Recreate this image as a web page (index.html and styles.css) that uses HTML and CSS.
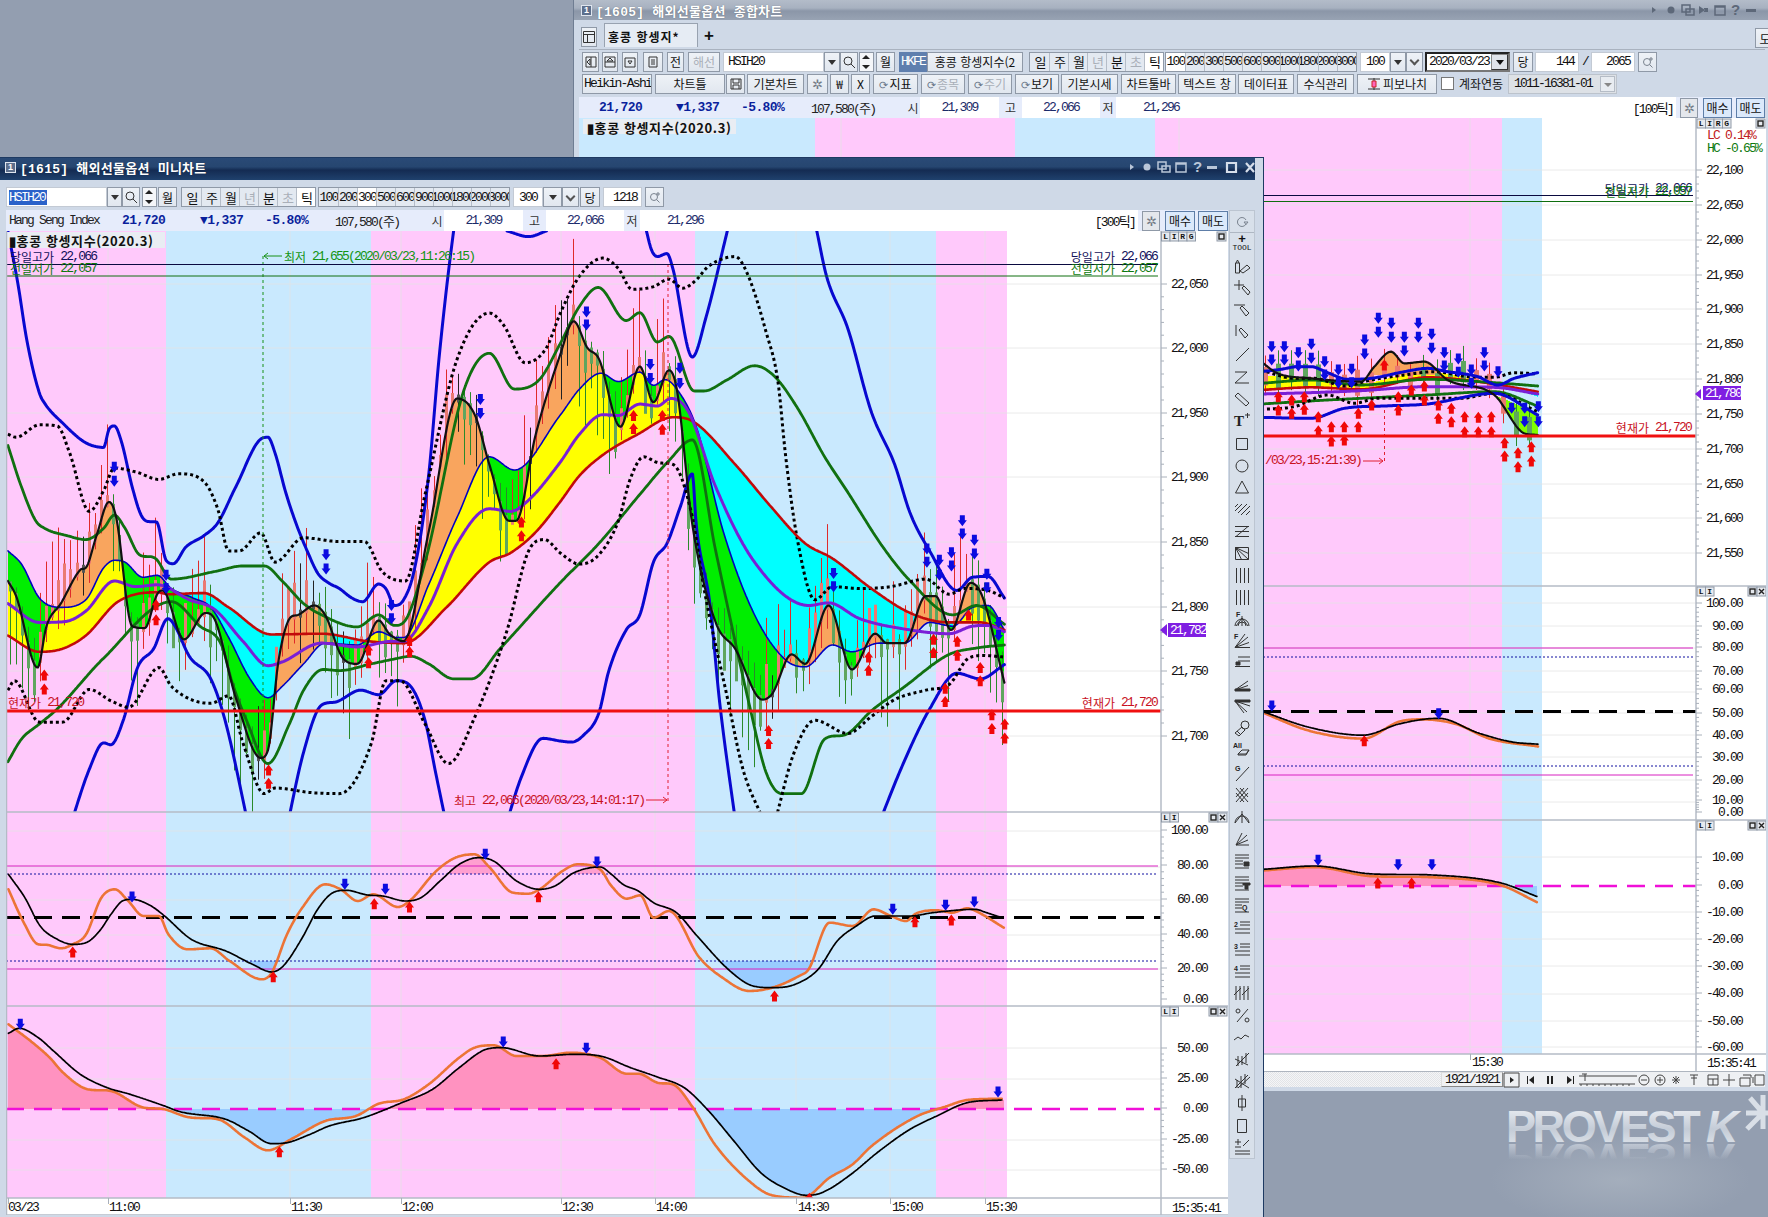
FILE: index.html
```html
<!DOCTYPE html>
<html lang="ko">
<head>
<meta charset="utf-8">
<title>해외선물옵션 차트</title>
<link rel="stylesheet" href="styles.css">
</head>
<body>
<main class="desktop">

<svg class="logo" viewBox="0 0 262 120" aria-label="PROVEST K">
  <defs>
    <linearGradient id="logoFill" x1="0" y1="0" x2="0" y2="1">
      <stop offset="0" stop-color="#f4f6f9"/><stop offset="0.55" stop-color="#c4ccd7"/><stop offset="1" stop-color="#e6eaef"/>
    </linearGradient>
    <linearGradient id="logoFade" x1="0" y1="0" x2="0" y2="1">
      <stop offset="0.5" stop-color="#d4dae3" stop-opacity="0"/><stop offset="0.85" stop-color="#d4dae3" stop-opacity=".75"/>
    </linearGradient>
  </defs>
  <text class="logo-main" x="0" y="44" fill="url(#logoFill)">PROVEST</text>
  <text class="logo-k" x="200" y="44" fill="url(#logoFill)">K</text>
  <g class="logo-flip"><text class="logo-main" x="0" y="-46" fill="url(#logoFade)">PROVEST</text><text class="logo-k" x="200" y="-46" fill="url(#logoFade)">K</text></g>
  <path class="logo-star" d="M244 0l13 15M241 31l16-16M240 15h22M257 -3v34"/>
</svg>

<section class="win back">
  <header class="title title-idle">
    <span class="num">1</span><span class="title-text">[1605] 해외선물옵션 종합차트</span>
    <svg class="title-icons-b" viewBox="0 0 110 16"><path d="M0 5l4 3-4 3z"/><circle cx="19" cy="8" r="3.5"/><path class="o" d="M30 3h8v7h-8zM34 7h8v6h-8z"/><path d="M47 4v8l6-4zM52 6h4v4h-4z"/><path class="o" d="M63 4h10v9H63zM63 5h10"/><text x="79" y="13">?</text><path d="M94 7h10v3H94z"/></svg>
  </header>
  <div class="tabs">
    <span class="btn sq w16"><svg viewBox="0 0 14 14" class="ic"><path d="M1.5 1.5h11v11h-11zM1.5 4.5h11M5.5 4.5v8"/></svg></span>
    <span class="tab">홍콩 항셍지*</span>
    <b class="tab-add">+</b>
    <span class="btn tab-end">도</span>
  </div>
  <div class="bar">
    <span class="btn w17 g3"><svg viewBox="0 0 14 14" class="ic"><path d="M2 2h10v10H2zM7 2v10M3 7l3-3v6z"/></svg></span>
    <span class="btn w16 g3"><svg viewBox="0 0 14 14" class="ic"><path d="M2 2h10v10H2zM2 7h10M7 3l3 3H4z"/></svg></span>
    <span class="btn w16 g4"><svg viewBox="0 0 14 14" class="ic"><path d="M2 3h10v9H2zM5 6h4l-2 3z"/></svg></span>
    <span class="btn w20 g5"><svg viewBox="0 0 14 14" class="ic"><path d="M3 2h8v10H3zM5 5h4M5 7h4M5 9h4"/></svg></span>
    <span class="btn w17 g4">전</span>
    <span class="btn w32 g4 off">해선</span>
    <span class="field w101 g3">HSIH20</span>
    <span class="btn w16 caret"></span>
    <span class="btn w18"><svg viewBox="0 0 14 14" class="ic"><circle cx="6" cy="6" r="4"/><path d="M9 9l4 4"/></svg></span>
    <span class="spin w15 g1"></span>
    <span class="btn w19 g2">월</span>
    <span class="hk w28 g4">HKFE</span>
    <span class="btn w96">홍콩 항셍지수(2</span>
    <span class="seg g6"><i>일</i><i>주</i><i>월</i><i class="off">년</i><i>분</i><i class="off">초</i><i class="on">틱</i></span>
    <span class="seg g1"><i class="on">100</i><i>200</i><i>300</i><i>500</i><i>600</i><i>900</i><i>1000</i><i>1800</i><i>2000</i><i>3000</i></span>
    <span class="field w30 g3 ctr">100</span>
    <span class="btn w16 caret"></span><span class="btn w17 chev"></span>
    <span class="field w85 g2 date">2020/03/23<span class="date-dd"></span></span>
    <span class="btn w20 g3">당</span>
    <span class="field w44 g2 end">144</span><span class="slash">/</span><span class="field w44 end">2065</span>
    <span class="btn w19 g3"><svg viewBox="0 0 14 14" class="ic soft"><circle cx="6" cy="7" r="3.5"/><path d="M8.5 9.5l3 3M10 2v4M8 4h4"/></svg></span>
  </div>
  <div class="bar">
    <span class="btn w70 g3 lt">Heikin-Ashi</span>
    <span class="btn w70 g3">차트틀</span>
    <span class="btn w19 g1"><svg viewBox="0 0 14 14" class="ic"><path d="M2 2h10v10H2zM4 2v4h6V2M4 12V8h6v4"/></svg></span>
    <span class="btn w57 g2">기본차트</span>
    <span class="btn w21 g3 gear">✲</span>
    <span class="btn w19 g2">₩</span>
    <span class="btn w19 g2">Ⅹ</span>
    <span class="btn w45 g3"><em>⟳</em>지표</span>
    <span class="btn w44 g3 off"><em>⟳</em>종목</span>
    <span class="btn w44 g3 off"><em>⟳</em>주기</span>
    <span class="btn w44 g3"><em>⟳</em>보기</span>
    <span class="btn w57 g2">기본시세</span>
    <span class="btn w55 g3">차트툴바</span>
    <span class="btn w58 g2">텍스트 창</span>
    <span class="btn w56 g2">데이터표</span>
    <span class="btn w57 g3">수식관리</span>
    <span class="btn w80 g3"><svg viewBox="0 0 14 14" class="ic fib"><path d="M1 2h12M1 12h12M7 1v12"/><path class="r" d="M5 4h4v6H5z"/></svg>피보나치</span>
    <span class="check g4"></span>
    <span class="plain w46 g5">계좌연동</span>
    <span class="combo w109 g3">1011-16381-01<span class="combo-dd"></span></span>
  </div>
  <div class="info info-back">
    <span class="i-px">21,720</span><span class="i-ch">▼1,337</span><span class="i-pc">-5.80%</span><span class="i-vol">107,580(주)</span>
    <span class="i-k">시</span><span class="i-v">21,309</span><span class="i-k2">고</span><span class="i-v2">22,066</span><span class="i-k3">저</span><span class="i-v3">21,296</span>
    <span class="i-fill">[100틱]</span>
    <span class="btn w18 gear g4">✲</span><span class="btn buy g5">매수</span><span class="btn buy g4">매도</span>
  </div>
  <svg id="backChart" class="chart-back" viewBox="578 118 1187 953"></svg>
  <div class="strip">
    <span class="strip-dots"></span>
    <span class="counter">1921/1921</span>
    <svg class="strip-icons" viewBox="0 0 262 16">
      <path class="o" d="M1 1h15v14H1z"/><path d="M7 5l4 3-4 3zM24 4v8h1V4zM31 4l-5 4 5 4zM44 4h2v8h-2zM48 4h2v8h-2zM64 4l5 4-5 4zM70 4h1v8h-1z"/>
      <path class="o" d="M76 4h58M76 12h56M82 2v7M79 2h5M78 14v-2M84 14v-2M90 14v-2M96 14v-2M102 14v-2M108 14v-2M114 14v-2M120 14v-2M126 14v-2"/>
      <circle class="o" cx="141" cy="8" r="5"/><path class="o" d="M138 8h6"/><circle class="o" cx="157" cy="8" r="5"/><path class="o" d="M154 8h6M157 5v6"/>
      <path class="o" d="M169 8h8M173 4v8M170 5l6 6M176 5l-6 6M187 3h8M191 3v10M188 6h6M205 3h10v10h-10zM205 7h10M210 7v6M220 8h12M226 2v12M237 6h10v8h-10zM240 3h8v3M252 3h9v10h-9zM250 5v6M263 5v6"/>
    </svg>
  </div>
</section>

<section class="win front">
  <header class="title title-live">
    <span class="num">1</span><span class="title-text">[1615] 해외선물옵션 미니차트</span>
    <svg class="title-icons-f" viewBox="0 0 128 16"><path d="M0 5l4 3-4 3z"/><circle cx="17" cy="8" r="3.5"/><path class="o" d="M28 3h8v7h-8zM32 7h8v6h-8z"/><path class="o" d="M46 4h10v9H46zM46 5h10"/><text x="63" y="13">?</text><path d="M77 7h10v3H77z"/><path class="o t" d="M97 4h9v9h-9z"/><path class="o t" d="M116 4l8 9M124 4l-8 9"/></svg>
  </header>
  <div class="bar bar-front">
    <span class="field w101 sel-wrap"><span class="sel">HSIH20</span></span>
    <span class="btn w15 caret"></span>
    <span class="btn w18"><svg viewBox="0 0 14 14" class="ic"><circle cx="6" cy="6" r="4"/><path d="M9 9l4 4"/></svg></span>
    <span class="spin w15 g2"></span>
    <span class="btn w19 g1">월</span>
    <span class="seg g4"><i>일</i><i>주</i><i>월</i><i class="off">년</i><i>분</i><i class="off">초</i><i class="on">틱</i></span>
    <span class="seg g2"><i>100</i><i>200</i><i class="on">300</i><i>500</i><i>600</i><i>900</i><i>1000</i><i>1800</i><i>2000</i><i>3000</i></span>
    <span class="field w30 g3 ctr">300</span>
    <span class="btn w19 caret"></span><span class="btn w17 chev"></span>
    <span class="btn w20 g1">당</span>
    <span class="field w39 g3 end">1218</span>
    <span class="btn w19 g3"><svg viewBox="0 0 14 14" class="ic soft"><circle cx="6" cy="7" r="3.5"/><path d="M8.5 9.5l3 3M10 2v4M8 4h4"/></svg></span>
  </div>
  <div class="front-main">
    <div class="front-left">
      <div class="info info-front">
        <span class="i-name">Hang Seng Index</span>
        <span class="i-px">21,720</span><span class="i-ch">▼1,337</span><span class="i-pc">-5.80%</span><span class="i-vol">107,580(주)</span>
        <span class="i-k">시</span><span class="i-v">21,309</span><span class="i-k2">고</span><span class="i-v2">22,066</span><span class="i-k3">저</span><span class="i-v3">21,296</span>
        <span class="i-fill">[300틱]</span>
        <span class="btn w18 gear g4">✲</span><span class="btn buy g5">매수</span><span class="btn buy g3">매도</span>
      </div>
      <svg id="frontChart" class="chart-front" viewBox="6 230 1222 984"></svg>
    </div>
    <aside class="tools">
      <div class="tool-refresh"><svg viewBox="0 0 14 14" class="ic soft"><path d="M11 5a4.5 4.5 0 1 0 0 4M9 7h4l-2 2.500z"/></svg></div>
      <div class="tool-head"><b>+</b><span>TOOL</span></div>
      <div id="toolIcons" class="tool-icons"></div>
    </aside>
  </div>
</section>
</main>
<script src="chart.js"></script>
</body>
</html>
```
FILE: styles.css
```css
*{box-sizing:border-box}
html,body{margin:0;padding:0;height:100%;overflow:hidden}
body{font:13px "Liberation Mono","Noto Sans CJK KR",monospace;letter-spacing:-1.8px;color:#111}
.desktop{position:relative;width:1768px;height:1217px;overflow:hidden;background:radial-gradient(ellipse 130px 45px at 1620px 1180px,#a4aebc,transparent),#939eb0}
.logo{position:absolute;left:1506px;top:1098px;width:262px;height:120px;overflow:visible}
.logo-main{font:bold 45px "Liberation Sans",sans-serif;letter-spacing:-3.4px}
.logo-k{font:italic bold 45px "Liberation Sans",sans-serif}
.logo-flip{transform:scaleY(-1)}
.logo-star{fill:none;stroke:#d9dfe7;stroke-width:5}

.win{position:absolute;display:flex;flex-direction:column;background:#cfd9e7}
.back{left:573px;top:0;width:1195px;height:1091px;padding:0 3px 0 5px;border-left:1px solid #6f7d92}
.front{left:0;top:157px;width:1264px;height:1060px;padding:0 8px 3px 0;border:1px solid #1e3a62;border-bottom:0;border-left:0}

.title{display:flex;align-items:center;height:20px;flex:none;color:#fff;font:bold 13px "Liberation Mono","Noto Sans CJK KR",sans-serif;letter-spacing:.25px;position:relative}
.back .title{margin:0 -3px 0 -5px;padding-left:7px}
.title-idle{background:linear-gradient(#b3bcc9,#a7b1c0 40%,#8b96a8 55%,#98a3b3)}
.title-live{height:22px;padding:0 0 3px 5px;background:linear-gradient(#2a4a76,#264670 40%,#142b52 55%,#1f416d)}
.num{width:11px;height:11px;border:1px solid #dfe5ee;background:#5d6f8c;font-size:9px;line-height:9px;letter-spacing:0;text-align:center;margin-right:4px;font-family:"Liberation Sans",sans-serif}
.title-text{text-shadow:0 0 1px #0006}
.title-icons-b,.title-icons-f{position:absolute;top:2px;height:16px;fill:#c9d1dc}
.title-icons-b{left:1078px;width:110px;fill:#5d6879;stroke:none}
.title-icons-f{left:1130px;width:128px;top:1px;fill:#b9c6d8}
.title-icons-b .o,.title-icons-f .o{fill:none;stroke:currentColor;stroke-width:1.5}
.title-icons-b{color:#5d6879;font:bold 15px "Liberation Sans",sans-serif;letter-spacing:0}
.title-icons-f{color:#b9c6d8;font:bold 15px "Liberation Sans",sans-serif;letter-spacing:0}
.title-icons-f .t{stroke:#d6deea;stroke-width:2.2}

.tabs{display:flex;align-items:flex-end;height:30px;padding:0 0 2px 2px;border-bottom:1px solid #a9b2bf;position:relative;flex:none}
.tab{width:94px;height:24px;margin-left:7px;padding:4px 0 0 3px;background:#e6ecf4;border:1px solid #98a2b0;border-bottom:0;font:bold 12px "Noto Sans CJK KR",sans-serif;letter-spacing:1px;white-space:nowrap}
.tab-add{margin:0 0 3px 6px;font:bold 17px "Liberation Sans",sans-serif;line-height:16px;letter-spacing:0}
.tab-end{position:absolute;left:1176px;top:8px;width:20px}

.bar{display:flex;align-items:center;height:21px;flex:none;white-space:nowrap}
.back .bar{margin-top:1px}
.bar-front{height:20px;margin:7px 0 3px 6px}
.btn{display:inline-flex;align-items:center;justify-content:center;height:20px;flex:none;background:linear-gradient(#eef2f7,#e1e7ef);border:1px solid #8f99a7;font-family:"Noto Sans CJK KR",sans-serif;font-size:12px;letter-spacing:0;overflow:hidden}
.btn.off,.off{color:#a9afb8}
.btn.lt{font:13px "Liberation Mono",monospace;letter-spacing:-1.7px;justify-content:flex-start;padding-left:1px}
.btn em{font-style:normal;color:#687588;font-size:11px;margin-right:1px}
.gear{color:#727a86;font-size:13px}
.caret::after{content:"";border:4px solid transparent;border-top:5px solid #333;margin-top:5px}
.chev::after{content:"";width:5px;height:5px;border:solid #555;border-width:0 2px 2px 0;transform:rotate(45deg);margin-top:-2px}
.ic{width:14px;height:14px;fill:none;stroke:#333;stroke-width:1}
.ic.soft{stroke:#7a838f}
.ic.fib{margin-right:2px}
.ic.fib .r{stroke:#c22;fill:#f6b}
.field{display:inline-flex;align-items:center;height:20px;flex:none;background:#fff;border:1px solid #c3cad4;padding:0 4px;overflow:hidden}
.field.ctr{justify-content:center}
.field.end{justify-content:flex-end}
.date{border:2px inset #777;position:relative;padding:0 2px}
.date-dd{position:absolute;right:0;top:0;width:17px;height:16px;background:#dfe3e9;border:1px outset #888}
.date-dd::after{content:"";position:absolute;left:4px;top:5px;border:4px solid transparent;border-top:5px solid #111}
.sel{background:#2a62c9;color:#fff;padding-right:2px}
.sel-wrap{padding-left:2px}
.spin{display:inline-flex;flex-direction:column;height:20px;flex:none;background:linear-gradient(#f4f6f9 48%,#666 48%,#666 52%,#f4f6f9 52%);border:1px solid #8f99a7;position:relative}
.spin::before,.spin::after{content:"";position:absolute;left:2px;border:4px solid transparent}
.spin::before{top:-2px;border-bottom:4px solid #222}
.spin::after{bottom:-2px;border-top:4px solid #222}
.hk{display:inline-flex;align-items:center;justify-content:center;height:20px;background:#5f7fae;color:#fff;overflow:hidden}
.slash{width:12px;text-align:center;flex:none}
.seg{display:inline-flex;flex:none;height:20px;border:1px solid #8f99a7;background:#e3e9f1}
.seg i{font-style:normal;width:19px;display:flex;align-items:center;justify-content:center;overflow:hidden;border-left:1px solid #b5bdc8;white-space:nowrap}
.seg i:first-child{border-left:0}
.seg i.on{background:#fff}
.check{width:13px;height:13px;background:#fff;border:1px solid #777;flex:none}
.plain{flex:none;font:12px "Noto Sans CJK KR",sans-serif;letter-spacing:0}
.combo{display:inline-flex;align-items:center;height:20px;flex:none;background:#dde1e6;border:1px solid #bcc3cc;padding-left:5px;position:relative}
.combo-dd{position:absolute;right:1px;top:1px;width:15px;height:16px;background:#e8ecf1;border:1px solid #b5bcc6}
.combo-dd::after{content:"";position:absolute;left:3px;top:6px;border:4px solid transparent;border-top:4px solid #888}

.w15{width:15px}.w16{width:16px}.w17{width:17px}.w18{width:18px}.w19{width:19px}.w20{width:20px}.w21{width:21px}.w28{width:28px}.w30{width:30px}.w32{width:32px}.w39{width:39px}.w44{width:44px}.w45{width:45px}.w46{width:46px}.w55{width:55px}.w56{width:56px}.w57{width:57px}.w58{width:58px}.w70{width:70px}.w80{width:80px}.w85{width:85px}.w96{width:96px}.w101{width:101px}.w109{width:109px}
.g1{margin-left:1px}.g2{margin-left:2px}.g3{margin-left:3px}.g4{margin-left:4px}.g5{margin-left:5px}.g6{margin-left:6px}

.info{display:flex;align-items:center;height:21px;flex:none;background:#e6ecfb;white-space:nowrap;color:#1b2b6a}
.info>span{flex:none}
.info-back{margin-top:3px}
.i-name{width:116px;padding-left:3px;color:#222}
.i-px,.i-ch,.i-pc{font-weight:bold;color:#0a1f9c;letter-spacing:-.6px}
.i-px{width:78px}.i-ch{width:65px}.i-pc{width:70px}
.i-vol{width:95px;color:#222}
.info-back .i-px{padding-left:20px;width:97px}
.i-k,.i-k2,.i-k3{font:12px "Noto Sans CJK KR",sans-serif;letter-spacing:0;color:#333;text-align:center}
.i-k{width:14px}
.i-v,.i-v2,.i-v3{background:#fff;height:21px;display:flex;align-items:center;justify-content:center}
.i-v{width:79px}.i-k2{width:23px}.i-v2{width:78px}.i-k3{width:16px}.i-v3{width:84px;justify-content:flex-start;padding-left:27px}
.info>.i-fill{flex:1 1 auto;background:#fff;height:21px;display:flex;align-items:center;justify-content:flex-end;color:#111;padding-right:3px}
.info .btn{height:20px;background:#e4e7ec}
.info .buy{width:29px;background:#dbe9fb;border-color:#5e7ea8;color:#111}
.info-front .buy{width:30px}

.chart-back{width:1187px;height:953px;flex:none;background:#fff;display:block}
.chart-front{width:1222px;height:984px;flex:none;background:#fff;display:block}
.strip{display:flex;align-items:center;height:16px;flex:none;background:#eef0f3;border-top:1px solid #aeb5bf;position:relative}
.strip-dots{flex:1;height:15px;background:repeating-conic-gradient(#e2e4e7 0 25%,#f4f5f7 0 50%) 0 0/2px 2px}
.counter{width:62px;height:15px;background:#f0f1f3;border:1px solid #888;border-top-color:#ddd;border-left-color:#ddd;display:flex;align-items:center;justify-content:center;flex:none}
.strip-icons{width:262px;height:16px;flex:none;fill:#222;color:#444}
.strip-icons .o{fill:none;stroke:#444;stroke-width:1}
.front-main{display:flex;flex:1;min-height:0}
.front-left{display:flex;flex-direction:column;width:1222px;margin-left:6px}
.tools{width:27px;margin-left:1px;height:949px;background:#d8e0ea;border:1px solid #bcc5d1;display:flex;flex-direction:column;align-items:center}
.tool-refresh{width:100%;height:23px;display:flex;align-items:center;justify-content:center;border-bottom:1px solid #aeb7c3}
.tool-head{height:23px;padding-top:2px;display:flex;flex-direction:column;align-items:center;line-height:7px}
.tool-head b{font:bold 13px "Liberation Sans",sans-serif;line-height:8px;letter-spacing:0}
.tool-head span{font:8px "Liberation Mono",monospace;line-height:9px;letter-spacing:0}
.tool-icons{display:flex;flex-direction:column;align-items:center}
.tool-ic{width:18px;height:22px;fill:none;stroke:#333;stroke-width:1;display:block}
.tool-ic text{fill:#222;stroke:none;font:bold 7px "Liberation Sans",sans-serif;letter-spacing:0}
.tool-ic text.big{font:bold 15px "Liberation Serif",serif}
.tool-ic .f{fill:#333}

/* chart strokes */
.lay{fill:none;stroke-linejoin:round;stroke-linecap:round}
.band-blue{fill:#c9e9fe}.band-pink{fill:#ffc9fb}
.grid{stroke:#e4e4e4;stroke-width:1;opacity:.75}
.sep{stroke:#b4bbc6;stroke-width:1.5}
.tick{stroke:#a9b0ba;stroke-width:1}
.l-bb{stroke:#0808d0;stroke-width:3}
.l-gg{stroke:#107010;stroke-width:2.8}
.l-dot{stroke:#000;stroke-width:3;stroke-dasharray:3 3;stroke-linecap:butt}
.l-tb{stroke:#0000c0;stroke-width:1.6}
.l-pu{stroke:#7a1fd6;stroke-width:3}
.l-rd{stroke:#c20a0a;stroke-width:2.6}
.l-bk{stroke:#111;stroke-width:2.2}
.l-bk1{stroke:#000;stroke-width:1.7}
.l-or{stroke:#ec7436;stroke-width:2.6}
.w-r{stroke:#df2a2a}.w-g{stroke:#2a8a2a}.w-k{stroke:#222}
.b-r{fill:#ea7a72}.b-g{fill:#5fa65f}.b-k{fill:#555}
.curr{stroke:#f01010;stroke-width:3}
.hi{stroke:#0a0a40;stroke-width:1}.lo{stroke:#0e6e0e;stroke-width:1}
.mag{stroke:#d820c0;stroke-width:1}
.dotb{stroke:#1010a0;stroke-width:1;stroke-dasharray:2 2}
.dash50{stroke:#000;stroke-width:3;stroke-dasharray:18 10}
.dash0{stroke:#f010d8;stroke-width:2.6;stroke-dasharray:18 10}
.guide-g{stroke:#169016;stroke-width:1;stroke-dasharray:3 3}
.guide-r{stroke:#e02030;stroke-width:1;stroke-dasharray:3 3}
.ar-g{stroke:#169016;fill:none}.ar-r{stroke:#e02030;fill:none}
.txt{font:13px "Liberation Mono","Noto Sans CJK KR",monospace;letter-spacing:-1.8px;dominant-baseline:central}
.ko{font:12px "Noto Sans CJK KR",sans-serif;letter-spacing:0}
.ax{fill:#111}
.t-hi{fill:#10105a}.t-lo{fill:#0e7a0e}.t-red{fill:#c8121e}.t-grn{fill:#129412}.t-dk{fill:#111}
.t-lc{fill:#c02020}
.chip{fill:#e9edf3}
.chip-t{font:bold 13px "Noto Sans CJK KR",sans-serif;letter-spacing:.6px;dominant-baseline:central;fill:#111}
.mini{fill:#e6e9ee;stroke:#8f99a7;stroke-width:1}
.mini-t{font:bold 8px "Liberation Mono",monospace;letter-spacing:0;fill:#111;dominant-baseline:central}
.mini-x{fill:none;stroke:#222;stroke-width:1.4}
.tag{fill:#7f1fe2}.tag-t{fill:#fff}.tag-a{fill:#7f1fe2}
```
FILE: chart.js
```js
(function () {
  var NS = 'http://www.w3.org/2000/svg';
  function el(p, tag, attrs, txt) {
    var e = document.createElementNS(NS, tag);
    for (var k in attrs) e.setAttribute(k, attrs[k]);
    if (txt != null) e.textContent = txt;
    p.appendChild(e);
    return e;
  }
  // coordinate maps from measured crops to page pixels
  var Z7 = function (X, Y) { return [X / 2.8, 230 + Y / 2.657]; };
  var Z8 = function (X, Y) { return [560 + X / 2.57, 230 + Y / 2.657]; };
  var Z9 = function (X, Y) { return [1260 + X / 3, 300 + Y / 3]; };
  var Z11 = function (X, Y) { return [X / 2.613, 800 + Y / 3]; };
  var Z12 = function (X, Y) { return [600 + X / 2.613, 800 + Y / 3]; };
  var SH = function (X, Y) { return [X * 1.1276, Y * 1.1276]; };

  function pts(map, a) { var o = []; for (var i = 0; i < a.length; i += 2) o.push(map(a[i], a[i + 1])); return o; }
  function join() {
    var o = [];
    for (var i = 0; i < arguments.length; i++) arguments[i].forEach(function (p) {
      if (!o.length || p[0] > o[o.length - 1][0]) o.push(p);
    });
    return o;
  }
  // monotone cubic through points, parameterised by x
  function fn(P) {
    var n = P.length, d = [], m = [];
    for (var i = 0; i < n - 1; i++) d[i] = (P[i + 1][1] - P[i][1]) / (P[i + 1][0] - P[i][0]);
    m[0] = d[0]; m[n - 1] = d[n - 2];
    for (i = 1; i < n - 1; i++) {
      if (d[i - 1] * d[i] <= 0) m[i] = 0;
      else m[i] = Math.sign(d[i]) * Math.min((Math.abs(d[i - 1]) + Math.abs(d[i])) / 2, 3 * Math.abs(d[i - 1]), 3 * Math.abs(d[i]));
    }
    var f = function (x) {
      if (x <= P[0][0]) return P[0][1];
      if (x >= P[n - 1][0]) return P[n - 1][1];
      var k = 0; while (k < n - 2 && x > P[k + 1][0]) k++;
      var h = P[k + 1][0] - P[k][0], t = (x - P[k][0]) / h, t2 = t * t, t3 = t2 * t;
      return (2 * t3 - 3 * t2 + 1) * P[k][1] + (t3 - 2 * t2 + t) * h * m[k] + (-2 * t3 + 3 * t2) * P[k + 1][1] + (t3 - t2) * h * m[k + 1];
    };
    f.x0 = P[0][0]; f.x1 = P[n - 1][0];
    return f;
  }
  function line(g, P, cls) {
    var f = fn(P), d = 'M' + f.x0.toFixed(1) + ' ' + f(f.x0).toFixed(1);
    for (var x = f.x0 + 1; x < f.x1; x += 1) d += 'L' + x.toFixed(1) + ' ' + f(x).toFixed(1);
    d += 'L' + f.x1.toFixed(1) + ' ' + f(f.x1).toFixed(1);
    el(g, 'path', { d: d, 'class': 'lay ' + cls });
    return f;
  }
  function fill(g, pick, x0, x1) {
    var paths = {};
    for (var x = Math.floor(x0); x < x1; x++) {
      var r = pick(x + 0.5);
      if (!r) continue;
      (paths[r[2]] = paths[r[2]] || []).push('M' + x + ' ' + r[0].toFixed(1) + 'V' + r[1].toFixed(1) + 'h1V' + r[0].toFixed(1) + 'z');
    }
    for (var c in paths) el(g, 'path', { d: paths[c].join(''), fill: c, 'shape-rendering': 'crispEdges' });
  }
  function arrow(g, x, y, dir, color) {
    var s = dir > 0 ? 1 : -1;
    var d = 'M' + (x - 2.5) + ' ' + (y - 5.5 * s) + 'h5v' + (5 * s) + 'h2l-4.500 ' + (6 * s) + 'l-4.500 ' + (-6 * s) + 'h2z';
    el(g, 'path', { d: d, fill: color });
  }
  function arrows(g, map, list, dir, color) {
    list.forEach(function (a) {
      for (var i = 1; i < a.length; i++) { var p = map(a[0], a[i]); arrow(g, p[0], p[1], dir, color); }
    });
  }
  // Hangul runs use a proportional CJK face, everything else the narrow mono run
  function text(g, x, y, s, cls, anchor) {
    var e = el(g, 'text', { x: x, y: y, 'class': 'txt ' + cls, 'text-anchor': anchor || 'start' });
    s.split(/([\uAC00-\uD7A3]+)/).forEach(function (run) {
      if (!run) return;
      if (/[\uAC00-\uD7A3]/.test(run)) el(e, 'tspan', { 'class': 'ko' }, run);
      else e.appendChild(document.createTextNode(run));
    });
    return e;
  }
  function plainText(g, x, y, s, cls, anchor) {
    return el(g, 'text', { x: x, y: y, 'class': cls, 'text-anchor': anchor || 'start' }, s);
  }
  function rect(g, x0, y0, x1, y1, cls) { return el(g, 'rect', { x: x0, y: y0, width: x1 - x0, height: y1 - y0, 'class': cls }); }
  function hl(g, x0, x1, y, cls) { return el(g, 'line', { x1: x0, x2: x1, y1: y, y2: y, 'class': cls }); }
  function vl(g, x, y0, y1, cls) { return el(g, 'line', { x1: x, x2: x, y1: y0, y2: y1, 'class': cls }); }
  function clip(svg, id, x0, y0, x1, y1) {
    var c = el(svg, 'clipPath', { id: id });
    el(c, 'rect', { x: x0, y: y0, width: x1 - x0, height: y1 - y0 });
    return el(svg, 'g', { 'clip-path': 'url(#' + id + ')' });
  }
  function axis(g, x, labels, anchorX, sub) {
    labels.forEach(function (l, i) {
      hl(g, x, x + 6, l[1], 'tick');
      text(g, anchorX, l[1], l[0], 'ax', 'end');
      var nxt = labels[i + 1];
      if (nxt && sub) for (var k = 1; k < sub; k++) hl(g, x, x + 3, l[1] + (nxt[1] - l[1]) * k / sub, 'tick');
    });
  }
  function mini(g, x, y, w, s) { rect(g, x, y, x + w, y + 9, 'mini'); plainText(g, x + w / 2, y + 4.5, s, 'mini-t', 'middle'); }
  function miniSet(g, x, y, letters) { letters.forEach(function (s, i) { mini(g, x + i * 8.5, y, 8.5, s); }); }
  function miniMax(g, x, y, close) {
    rect(g, x, y, x + 9, y + 9, 'mini'); rect(g, x + 2, y + 2, x + 7, y + 7, 'mini-x');
    if (close) { rect(g, x + 9, y, x + 18, y + 9, 'mini'); el(g, 'path', { d: 'M' + (x + 11) + ' ' + (y + 2) + 'l5 5m0 -5l-5 5', 'class': 'mini-x' }); }
  }
  var seed = 7;
  function rnd() { seed = (seed * 16807) % 2147483647; return seed / 2147483647; }

  /* ---------- FRONT WINDOW ---------- */
  var fs = document.getElementById('frontChart');
  var bands = [[6, 166, 'band-pink'], [166, 371, 'band-blue'], [371, 695, 'band-pink'], [695, 936, 'band-blue'], [936, 1007, 'band-pink']];
  bands.forEach(function (b) { rect(fs, b[0], 230, b[1], 1197, b[2]); });
  [283, 347, 412, 476, 541, 606, 670, 735, 830, 866, 899, 934, 968, 1047, 1078, 1139, 1169].forEach(function (y) { hl(fs, 6, 1161, y, 'grid'); });
  [108, 290, 401, 561, 655, 796, 890, 985].forEach(function (x) { vl(fs, x, 230, 1197, 'grid'); });

  var J = join(pts(Z7, [22,930,45,970,105,1160,130,1050,170,990,225,900,240,895,270,810,305,720,325,760,370,1050,405,1055,440,965,455,955,515,1085,575,1015,600,1030,660,1240,730,1400,750,1380,780,1140,815,1025,835,1020,880,995,910,1020,960,1135,1000,1150,1060,1035,1090,1070,1130,1090,1200,800,1280,445,1330,490,1370,620,1425,770,1445,770,1500,540,1568,330]),
    pts(Z8, [0,330,35,240,70,310,100,340,155,520,205,360,240,455,280,370,300,420,340,780,400,1040,450,1110,520,1245,545,1230,595,1125,630,1150,690,995,750,1165,810,1070,840,1095,885,1095,940,970,965,970,1005,1060,1055,935,1085,970,1142,1200]));
  var G = join(pts(Z7, [22,850,60,885,110,975,170,1000,240,980,290,895,320,875,350,880,400,920,440,915,480,950,540,975,590,1000,640,1080,700,1190,750,1240,790,1210,850,1150,910,1095,1000,1100,1060,1065,1110,1080,1130,1080,1200,940,1280,760,1370,600,1440,635,1568,490]),
    pts(Z8, [0,490,50,420,105,378,150,400,205,375,240,410,270,395,300,420,350,520,420,800,500,1020,580,1140,630,1158,700,1100,750,1118,820,1095,885,1095,950,1040,1010,1050,1060,1000,1100,995,1142,1060]));
  var H = join(pts(Z7, [22,990,110,1040,180,1038,240,1010,320,930,380,945,440,940,530,980,600,1005,680,1090,750,1155,790,1145,900,1095,1000,1105,1100,1090,1130,1090,1200,1000,1280,830,1370,738,1430,745,1480,715,1568,615]),
    pts(Z8, [0,615,50,540,110,488,150,490,205,460,250,465,285,445,330,480,400,680,500,880,640,995,690,988,770,1030,900,1060,1000,1070,1060,1050,1100,1048,1142,1065]));
  var I = join(pts(Z7, [22,1075,110,1118,175,1110,240,1075,330,985,440,960,470,965,570,962,640,1000,760,1072,900,1070,1030,1090,1130,1095,1250,1000,1370,880,1430,855,1500,800,1568,720]),
    pts(Z8, [0,720,50,650,110,595,200,540,290,495,340,505,450,620,540,730,630,830,700,870,800,950,900,1015,1000,1040,1080,1040,1142,1060]));
  var fJ = fn(J), fG = fn(G), fI = fn(I);

  var g = clip(fs, 'cpF1', 6, 230, 1161, 811);
  var X0 = 8, X1 = 1004;
  fill(g, function (x) {
    var a = fG(x), b = fI(x);
    return a < b ? [a, b, '#ffff00'] : [b, a, '#00ffff'];
  }, X0, X1);
  fill(g, function (x) {
    var a = fJ(x), b = fG(x);
    return a < b ? [a, b, '#f9a55e'] : [b, a, '#00ee00'];
  }, X0, X1);

  // candles
  for (var cx = 10; cx < 1006; cx += 6.05) {
    var px = Math.round(cx) + 0.5, j = fJ(px), sl = fJ(px + 4) - fJ(px - 4), r1 = rnd(), r2 = rnd(), r3 = rnd();
    var kind = sl < -1.5 ? 'r' : sl > 1.5 ? 'g' : (r3 < 0.4 ? 'r' : r3 < 0.8 ? 'g' : 'k');
    if (r3 > 0.93) kind = 'k';
    var top = kind === 'r' ? j - 22 - r1 * 62 : kind === 'g' ? j - 4 - r1 * 28 : j - 15 - r1 * 40;
    var bot = kind === 'g' ? j + 22 + r2 * 62 : kind === 'r' ? j + 3 + r2 * 28 : j + 15 + r2 * 40;
    vl(g, px, top, bot, 'w-' + kind);
    var bt = kind === 'r' ? j - 6 - r2 * 30 : j - 4, bb = kind === 'g' ? j + 6 + r1 * 30 : j + 4;
    rect(g, px - 1.5, bt, px + 1.5, bb, 'b-' + kind);
  }
  line(g, G, 'l-tb');
  // upper and lower bollinger
  [pts(Z7, [22,0,50,140,75,290,110,430,125,458,175,510,235,560,265,572,290,575,305,527,320,518,340,560,370,680,395,755,415,772,438,773,465,875,485,884,520,840,570,810,610,775,660,680,735,550,750,548,770,590,800,695,830,780,860,850,890,910,920,935,950,950,985,975,1015,985,1060,938,1080,950,1105,995,1130,980,1160,900,1200,650,1230,330,1270,0,1285,-90]),
   pts(Z7, [1420,0,1480,15,1530,0]),
   join(pts(Z8, [222,0,235,50,250,68,275,60,290,100,340,335,375,230,430,0])),
   pts(Z8, [660,0,685,120,740,260,800,480,860,620,900,750,950,850,1020,955,1060,920,1100,918,1142,975]),
   pts(Z7, [190,1600,250,1430,290,1360,310,1365,345,1300,385,1160,430,1110,470,1030,490,1050,530,1130,590,1190,630,1300,700,1600]),
   pts(Z7, [800,1600,850,1385,900,1260,945,1250,1010,1220,1060,1232,1110,1195,1150,1210,1190,1300,1220,1440,1255,1600]),
   join(pts(Z7, [1410,1600,1460,1450,1520,1348,1568,1355]), pts(Z8, [0,1355,30,1358,60,1340,100,1280,125,1170,170,1060,205,1020,240,880,275,830,310,730,340,645,350,780,385,990,410,1250,455,1600])),
   pts(Z8, [810,1600,880,1420,950,1270,1020,1175,1080,1190,1142,1152])
  ].forEach(function (P) { line(g, P, 'l-bb'); });
  line(g, join(pts(Z7, [22,570,60,680,100,770,125,790,190,810,240,820,290,790,320,755,350,790,390,860,435,870,480,925,600,905,680,890,740,890,790,930,850,990,900,1020,1000,1052,1060,1020,1105,1048,1130,1040,1190,880,1300,420,1370,325,1440,420,1510,395,1568,300]),
    pts(Z8, [0,300,50,200,98,150,170,238,205,217,250,295,280,280,345,425,370,425,430,395,500,358,550,385,610,470,680,600,740,695,830,840,900,930,1010,1020,1070,995,1142,1045])), 'l-gg');
  line(g, join(pts(Z7, [22,1410,60,1350,110,1310,160,1270,290,1135,480,985,560,1050,620,1100,650,1200,690,1300,750,1415,810,1310,850,1220,905,1165,950,1168,1040,1150,1100,1138,1150,1130,1200,1150,1270,1190,1320,1190,1400,1110,1568,935]),
    pts(Z8, [0,935,100,830,205,700,280,610,340,555,400,850,490,1275,530,1440,570,1495,620,1495,680,1350,740,1335,800,1275,880,1215,1000,1125,1070,1108,1142,1100])), 'l-gg');
  line(g, join(pts(Z7, [22,540,45,548,110,515,160,518,195,590,250,745,290,690,320,630,380,640,445,660,500,645,570,665,610,740,640,850,670,850,730,802,770,880,850,815,950,825,1020,825,1070,905,1135,930,1190,700,1280,340,1370,218,1410,250,1470,350,1530,310,1568,220]),
    pts(Z8, [0,220,50,120,110,72,150,100,185,155,240,148,280,128,315,152,350,130,380,95,450,68,480,110,530,270,560,400,580,600,610,820,655,980,700,945,770,950,850,945,940,925,1000,965,1040,950,1100,955,1142,975])), 'l-dot');
  line(g, join(pts(Z7, [22,1220,40,1195,110,1305,175,1305,250,1218,310,1248,360,1265,445,1160,480,1210,590,1255,640,1235,680,1360,740,1495,770,1480,870,1492,950,1495,1040,1360,1080,1195,1120,1195,1190,1310,1255,1415,1330,1290,1420,1060,1480,850,1525,820,1568,855]),
    pts(Z8, [0,855,50,885,100,860,150,770,180,660,215,600,250,615,290,620,340,760,370,950,430,1240,470,1430,520,1560])), 'l-dot');
  line(g, pts(Z8, [555,1560,600,1390,655,1300,740,1335,800,1290,860,1245,940,1220,1000,1205,1050,1135,1090,1128,1142,1132]), 'l-dot');
  line(g, I, 'l-rd');
  line(g, H, 'l-pu');
  line(g, J, 'l-bk');

  // guide lines and levels
  vl(g, 263, 255, 710, 'guide-g');
  vl(g, 668, 263, 800, 'guide-r');
  hl(fs, 6, 1158, 263.5, 'hi');
  hl(fs, 6, 1158, 275, 'lo');
  hl(fs, 6, 1161, 710, 'curr');
  var B = '#0b0be0', R = '#f00808';
  arrows(g, Z7, [[320,628,665],[465,915,950],[913,860,898],[1096,995,1030],[1345,448,485]], 1, B);
  arrows(g, Z8, [[68,215,250],[232,355,392],[308,365,405],[703,910,945],[943,845,880],[975,875,915],[1006,855,890],[1034,770,805],[1065,822,858],[1097,912,948],[1127,1040,1075]], 1, B);
  arrows(g, Z7, [[124,1180,1217],[437,993,1033],[752,1432,1467],[1032,1113,1147],[1147,1088,1118],[1460,773,810]], -1, R);
  arrows(g, Z8, [[189,490,525],[263,490,527],[536,1327,1362],[793,1132,1167],[960,1085,1120],[1021,1090,1127],[1080,1160,1195],[990,1215,1250],[1050,1020],[1110,1285,1322],[1143,1310,1347]], -1, R);

  rect(fs, 7, 231, 165, 247, 'chip');
  plainText(fs, 9, 239, '▮홍콩 항셍지수(2020.3)', 'chip-t');
  text(fs, 10, 255, '당일고가 22,066', 't-hi');
  text(fs, 10, 267, '전일저가 22,057', 't-lo');
  text(fs, 1157, 255, '당일고가 22,066', 't-hi', 'end');
  text(fs, 1157, 267, '전일저가 22,057', 't-lo', 'end');
  text(fs, 8, 701, '현재가 21,720', 't-red');
  text(fs, 1157, 701, '현재가 21,720', 't-red', 'end');
  text(fs, 284, 255, '최저 21,655(2020/03/23,11:26:15)', 't-grn');
  el(fs, 'path', { d: 'M282 255H264M268 252l-4 3 4 3', 'class': 'ar-g' });
  text(fs, 454, 799, '최고 22,066(2020/03/23,14:01:17)', 't-red');
  el(fs, 'path', { d: 'M646 799H667M663 796l4 3-4 3', 'class': 'ar-r' });

  // panel 2
  var p2 = clip(fs, 'cpF2', 6, 811, 1161, 1005);
  var J2 = join(pts(Z11, [22,220,65,290,105,375,150,415,190,430,225,425,260,390,290,340,320,300,345,295,395,315,430,345,500,415,590,450,660,490,710,513,740,495,790,410,830,325,870,275,905,268,960,282,1000,285,1060,300,1100,290,1150,240,1200,190,1250,170,1290,180,1350,240,1410,265,1450,255,1500,215,1568,198]),
    pts(Z12, [0,198,30,220,60,250,100,270,140,305,200,335,250,400,340,510,400,555,450,560,510,550,570,505,620,420,670,375,720,345,810,345,870,335,980,325,1010,335,1050,350]));
  var O2 = join(pts(Z11, [22,265,60,360,100,430,125,432,160,442,190,430,225,400,265,290,300,265,335,300,375,345,415,345,440,400,490,445,550,442,600,480,685,535,710,515,750,400,790,320,850,250,890,265,935,300,975,280,1040,318,1070,300,1140,210,1190,170,1240,160,1280,200,1340,275,1380,278,1410,265,1470,210,1510,190,1568,205]),
    pts(Z12, [0,205,30,255,70,293,105,283,140,350,180,330,260,470,320,530,390,570,450,560,520,525,545,505,600,365,660,375,715,325,760,345,800,360,825,338,880,328,920,335,960,322,990,335,1055,380]));
  var fJ2 = fn(J2), fO2 = fn(O2);
  fill(p2, function (x) {
    var a = fJ2(x), b = fO2(x), top = Math.min(a, b), low = Math.max(a, b);
    if (top > 960) return [960, top, '#99ccff'];
    if (low < 873) return [low, 873, '#ff9fd0'];
    return null;
  }, 8, 1004);
  hl(p2, 6, 1158, 865, 'mag'); hl(p2, 6, 1158, 968, 'mag');
  hl(p2, 6, 1158, 873, 'dotb'); hl(p2, 6, 1158, 960, 'dotb');
  hl(p2, 6, 1161, 916.5, 'dash50');
  line(p2, O2, 'l-or'); line(p2, J2, 'l-bk1');
  arrows(p2, Z11, [[345,288],[901,250],[1007,265],[1268,160],[1560,183]], 1, B);
  arrows(p2, Z12, [[765,325],[903,313],[978,303]], 1, B);
  arrows(p2, Z11, [[190,453],[714,527],[978,308],[1070,318],[1407,287]], -1, R);
  arrows(p2, Z12, [[456,585],[823,362],[918,357]], -1, R);

  // panel 3
  var p3 = clip(fs, 'cpF3', 6, 1005, 1161, 1197);
  var J3 = join(pts(Z11, [22,697,50,682,100,710,140,750,210,820,280,860,340,880,430,915,470,932,590,955,650,990,710,1028,750,1025,810,1000,860,975,950,950,1050,905,1130,865,1200,800,1270,745,1310,740,1410,765,1500,760,1568,765]),
    pts(Z12, [0,765,80,800,150,828,220,860,280,925,350,1020,420,1115,480,1160,540,1183,580,1175,650,1125,730,1050,810,985,880,945,960,905,1050,897]));
  var O3 = join(pts(Z11, [22,670,80,720,130,770,165,815,230,865,290,870,370,918,430,925,490,948,570,955,640,1010,700,1048,760,1015,850,960,930,945,990,908,1055,895,1120,850,1200,770,1240,740,1290,733,1350,765,1420,765,1490,755,1568,770]),
    pts(Z12, [0,772,70,818,100,818,150,845,190,850,240,915,300,1030,400,1150,450,1183,530,1190,600,1130,660,1090,710,1035,830,945,900,918,960,897,1050,893]));
  var fJ3 = fn(J3), fO3 = fn(O3);
  fill(p3, function (x) {
    var a = fJ3(x), b = fO3(x), top = Math.min(a, b), low = Math.max(a, b);
    if (low < 1108) return [low, 1108, '#ff92c0'];
    if (top > 1108) return [1108, top, '#99ccff'];
    return null;
  }, 8, 1004);
  hl(p3, 6, 1161, 1108, 'dash0');
  line(p3, O3, 'l-or'); line(p3, J3, 'l-bk1');
  arrows(p3, Z11, [[53,670],[1315,723],[1532,742]], 1, B);
  arrows(p3, Z12, [[1040,873]], 1, B);
  arrows(p3, Z11, [[730,1052],[1453,788]], -1, R);
  arrows(p3, Z12, [[547,1192]], -1, R);

  // frame, axes
  hl(fs, 6, 1228, 811, 'sep'); hl(fs, 6, 1228, 1005, 'sep'); hl(fs, 6, 1228, 1197, 'sep'); hl(fs, 6, 1228, 1214, 'sep');
  vl(fs, 1161, 230, 1214, 'sep'); vl(fs, 6.5, 230, 1214, 'sep');
  axis(fs, 1161, [['22,050',283],['22,000',347],['21,950',412],['21,900',476],['21,850',541],['21,800',606],['21,750',670],['21,700',735]], 1207, 5);
  axis(fs, 1161, [['100.00',829],['80.00',864],['60.00',898],['40.00',933],['20.00',967],['0.00',998]], 1207, 5);
  axis(fs, 1161, [['50.00',1047],['25.00',1077],['0.00',1107],['-25.00',1138],['-50.00',1168]], 1207, 5);
  [['03/23',8,8],['11:00',108,109],['11:30',290,291],['12:00',401,402],['12:30',561,562],['14:00',655,656],['14:30',796,798],['15:00',890,892],['15:30',985,986]].forEach(function (t) {
    vl(fs, t[1] + 0.5, 1197, 1203, 'tick');
    text(fs, t[2], 1206, t[0], 't-dk');
  });
  text(fs, 1172, 1207, '15:35:41', 'ax');
  miniSet(fs, 1161.5, 231, ['L', 'I', 'R', 'G']); miniMax(fs, 1217, 231, false);
  miniSet(fs, 1161.5, 812, ['L', 'I']); miniMax(fs, 1209, 812, true);
  miniSet(fs, 1161.5, 1006, ['L', 'I']); miniMax(fs, 1209, 1006, true);
  el(fs, 'path', { d: 'M1160 629l7-6v12z', 'class': 'tag-a' });
  rect(fs, 1168, 622, 1206, 636, 'tag');
  text(fs, 1170, 629, '21,782', 'tag-t');

  /* ---------- BACK WINDOW ---------- */
  var bs = document.getElementById('backChart');
  [[578, 814, 'band-blue'], [814, 1014, 'band-pink'], [1014, 1154, 'band-blue'], [1154, 1501, 'band-pink'], [1501, 1541, 'band-blue']].forEach(function (b) { rect(bs, b[0], 118, b[1], 1054, b[2]); });
  [170, 205, 240, 275, 309, 344, 379, 414, 449, 484, 518, 553, 603, 626, 648, 671, 692, 713, 735, 757, 780, 802, 857, 912, 939, 966, 994, 1021, 1047].forEach(function (y) { hl(bs, 578, 1695, y, 'grid'); });
  vl(bs, 1469, 118, 1054, 'grid'); vl(bs, 1178, 118, 1054, 'grid'); vl(bs, 840, 118, 1054, 'grid');
  var bp = clip(bs, 'cpB1', 1262, 118, 1695, 586);

  var bYel = pts(Z9, [0,228,150,232,300,250,430,225,520,218,640,238,720,255,830,290]);
  var bThin = pts(Z9, [0,185,50,220,150,235,300,245,340,200,390,155,430,190,490,185,560,240,700,285,790,400,830,405]);
  var fRed = fn(pts(Z9, [0,270,150,262,300,268,500,232,650,245,830,275])), fYel = fn(bYel), fThin = fn(bThin), fLow = fn(pts(Z9, [700,285,760,310,830,345]));
  fill(bp, function (x) { var a = fYel(x), b = fRed(x); return a < b ? [a, b, '#ffff00'] : [b, a, '#00ffff']; }, 1262, 1537);
  fill(bp, function (x) { var t = fThin(x); return t < 373 ? [t, 375, '#f9a55e'] : null; }, 1368, 1437);
  fill(bp, function (x) { return [fLow(x), fThin(x), '#7fff00']; }, 1494, 1537);
  for (var bx = 1264; bx < 1540; bx += 13.2) {
    var bpx = Math.round(bx) + 0.5, bj = fYel(bpx) - 2, bup = fThin(bpx + 5) < fThin(bpx - 5), br = rnd(), br2 = rnd();
    if (bpx > 1370 && bpx < 1440) bj = fThin(bpx) + 14;
    if (bpx > 1495) bj = fThin(bpx) - 4;
    var bk = bup || (bpx > 1360 && bpx < 1420) ? 'r' : (br > 0.35 ? 'g' : 'r');
    vl(bp, bpx, bj - 14 - br * 18, bj + 10 + br2 * 18, 'w-' + bk);
    rect(bp, bpx - 2.5, bj - 4 - br * 12, bpx + 2.5, bj + 4 + br2 * 12, 'b-' + bk);
  }
  line(bp, pts(Z9, [0,270,150,262,300,268,500,232,650,245,830,275]), 'l-rd');
  line(bp, pts(Z9, [0,282,150,278,300,272,500,260,700,262,830,282]), 'l-pu');
  line(bp, pts(Z9, [0,250,150,240,300,255,500,238,700,248,830,258]), 'l-gg');
  line(bp, pts(Z9, [0,312,200,300,300,295,500,285,700,275,830,318]), 'l-gg');
  line(bp, pts(Z9, [0,210,100,235,160,235,250,258,330,240,430,225,520,215,620,230,700,232,760,218,830,222]), 'l-dot');
  line(bp, pts(Z9, [0,328,100,320,200,285,280,310,350,295,600,295,700,280,830,335]), 'l-dot');
  line(bp, pts(Z9, [0,215,60,208,110,200,150,200,200,218,260,238,330,235,430,215,500,205,560,215,650,230,710,255,760,235,830,218]), 'l-bb');
  line(bp, pts(Z9, [0,352,150,355,250,325,370,318,500,312,700,280,830,345]), 'l-bb');
  line(bp, bThin, 'l-bk');
  hl(bs, 1262, 1695, 436, 'curr');
  hl(bs, 1121, 1692, 195.5, 'hi');
  hl(bs, 1121, 1692, 201.5, 'lo');
  vl(bp, 1383.5, 410, 461, 'guide-r');
  arrows(bp, Z9, [[32,140,180],[70,140,180],[112,158,198],[151,133,175],[191,185,225],[232,210,250],[272,208,248],[311,120,162],[352,55,97],[391,70,112],[430,112,153],[472,70,112],[512,103,145],[550,158,198],[592,177,217],[631,210,250],[670,158,198],[711,215],[752,325],[791,325,365],[832,320,365]], 1, B);
  arrows(bp, Z9, [[52,290,330],[92,300,340],[130,290,328],[172,350,392],[211,380,423],[250,380,420],[292,340,380],[332,315],[370,195],[412,290,330],[451,270],[490,258,300],[532,315,355],[571,325,365],[611,350,395],[652,352,395],[691,350,395],[731,428,468],[771,458,500],[811,440,483]], -1, R);
  text(bs, 1264, 460, '/03/23,15:21:39)', 't-red');
  el(bs, 'path', { d: 'M1362 461H1382M1378 458l4 3-4 3', 'class': 'ar-r' });
  text(bs, 1690, 427, '현재가 21,720', 't-red', 'end');
  text(bs, 1690, 188, '당일고가 22,066', 't-hi', 'end');
  text(bs, 1690, 191, '전일저가 22,057', 't-lo', 'end');
  rect(bs, 582, 119, 735, 134, 'chip');
  plainText(bs, 586, 127, '▮홍콩 항셍지수(2020.3)', 'chip-t');

  var b2 = clip(bs, 'cpB2', 1262, 586, 1695, 820);
  hl(b2, 1262, 1692, 648, 'mag'); hl(b2, 1262, 1692, 775, 'mag');
  hl(b2, 1262, 1692, 657, 'dotb'); hl(b2, 1262, 1692, 766, 'dotb');
  hl(b2, 1262, 1695, 711.5, 'dash50');
  line(b2, pts(SH, [1119,632,1160,648,1208,655,1240,640,1260,638,1290,642,1320,655,1363,662]), 'l-or');
  line(b2, pts(SH, [1119,631,1160,645,1208,652,1240,642,1275,637,1310,650,1340,658,1363,660]), 'l-bk1');
  arrows(b2, SH, [[1127,626],[1275,633]], 1, B); arrows(b2, SH, [[1209,657]], -1, R);

  var b3 = clip(bs, 'cpB3', 1262, 820, 1695, 1054);
  var bJ3 = pts(SH, [1119,771,1165,768,1215,775,1270,776,1330,783,1362,795]);
  var bO3 = pts(SH, [1119,772,1165,769,1215,777,1270,778,1330,785,1362,800]);
  var fbJ3 = fn(bJ3), fbO3 = fn(bO3);
  fill(b3, function (x) {
    var a = fbJ3(x), b = fbO3(x), top = Math.min(a, b), low = Math.max(a, b);
    if (low < 886) return [low, 886, '#ff92c0'];
    if (top > 886) return [886, top, '#99ccff'];
    return null;
  }, 1262, 1536);
  hl(b3, 1262, 1695, 886, 'dash0');
  line(b3, bO3, 'l-or'); line(b3, bJ3, 'l-bk1');
  arrows(b3, SH, [[1168,763],[1239,767],[1269,767]], 1, B); arrows(b3, SH, [[1221,783],[1251,783]], -1, R);

  hl(bs, 578, 1765, 586, 'sep'); hl(bs, 578, 1765, 820, 'sep'); hl(bs, 578, 1765, 1054, 'sep');
  vl(bs, 1695, 118, 1071, 'sep');
  axis(bs, 1695, [['22,100',170],['22,050',205],['22,000',240],['21,950',275],['21,900',309],['21,850',344],['21,800',379],['21,750',414],['21,700',449],['21,650',484],['21,600',518],['21,550',553]], 1741, 5);
  axis(bs, 1695, [['100.00',603],['90.00',626],['80.00',647],['70.00',671],['60.00',689],['50.00',713],['40.00',735],['30.00',757],['20.00',780],['10.00',800],['0.00',812]], 1741, 5);
  axis(bs, 1695, [['10.00',857],['0.00',885],['-10.00',912],['-20.00',939],['-30.00',966],['-40.00',993],['-50.00',1021],['-60.00',1047]], 1741, 5);
  text(bs, 1706, 135, 'LC  0.14%', 't-lc');
  text(bs, 1706, 148, 'HC -0.65%', 't-lo');
  miniSet(bs, 1696, 119, ['L', 'I', 'R', 'G']); miniMax(bs, 1755, 119, false);
  miniSet(bs, 1696, 587, ['L', 'I']); miniMax(bs, 1747, 587, true);
  miniSet(bs, 1696, 821, ['L', 'I']); miniMax(bs, 1747, 821, true);
  el(bs, 'path', { d: 'M1694 394l6-5v10z', 'class': 'tag-a' });
  rect(bs, 1702, 386, 1740, 400, 'tag');
  text(bs, 1704, 393, '21,780', 'tag-t');
  vl(bs, 1469.5, 1054, 1060, 'tick');
  text(bs, 1471, 1062, '15:30', 't-dk');
  text(bs, 1706, 1063, '15:35:41', 'ax');

  /* ---------- TOOL COLUMN ---------- */
  var p = function (d, c) { return '<path d="' + d + '"' + (c ? ' class="' + c + '"' : '') + '/>'; };
  var t = function (x, y, s, c) { return '<text x="' + x + '" y="' + y + '"' + (c ? ' class="' + c + '"' : '') + '>' + s + '</text>'; };
  var icons = [
    p('M2.500 7h4v10h-4zM3 7l1.500-3 1.500 3M7 15l7-6 3 3-7 5z'),
    p('M1 7h10M6 2v10M9 10l2-2 6 6-2 3z'),
    p('M1 5h11M7 8l2-2 7 7-3 3z'),
    p('M3 3v11M6 8l2-2 7 7-3 3z'),
    p('M3 17L16 4'),
    p('M2 17h14M2 6h12M14 6L2 17'),
    p('M2 8l3-3 11 10-3 3z'),
    t(1, 16, 'T', 'big') + p('M12 5h5M14.500 3v5'),
    p('M3.500 6.500h11v11h-11z'),
    '<circle cx="9" cy="12" r="6"/>',
    p('M9 5l6.500 12h-13z'),
    p('M2 13l7-7M5 15l9-9M8 17l9-9M2 9l3-3M13 17l4-4'),
    p('M2 6.500h14M2 11.500h14M2 16.500h14M15 6.500L3 16.500'),
    p('M2.500 5.500h13v12h-13zM2.500 5.500l13 12M2.500 5.500l13 6M2.500 5.500l6 12'),
    p('M3.500 4v15M7.500 4v15M11.500 4v15M15.500 4v15'),
    p('M3.500 4v15M7.500 4v15M11.500 4v15M15.500 4v15'),
    t(3, 9, 'F') + p('M2 18a7 7 0 0 1 14 0M5 18a4 4 0 0 1 8 0M9 8v10M9 10l-6 8M9 10l6 8'),
    t(1, 9, 'F') + p('M2 17.500h15M2 17.500L15 7M2 17.500L12 4M2 17.500l14-5'),
    p('M5 5h12M5 9h12M2 14.500h15') + p('M3 10h4v3H3z', 'f'),
    p('M2 16.500h15M2 16L15 7M2 16l13-4.500') + p('M2 15h15v2H2z', 'f'),
    p('M2 5h15M2 5l12 11M2 5l15 5M2 5l9 12') + p('M2 4h15v2H2z', 'f'),
    '<circle cx="12" cy="7" r="4"/>' + p('M2 15l7-6 3 3-6 6zM4 13l3 3'),
    t(0, 8, 'All') + p('M5 14l4-4h7l-3 5H5zM5 14h8l3-4'),
    t(2, 9, 'G') + p('M3 19L16 5'),
    p('M3 4l12 14M15 4L3 18M7 4l8 9M11 4l-8 9M3 9l8 9M15 9l-8 9'),
    p('M2 17a7 7 0 0 1 14 0M9 5v12M9 8l-7 9M9 8l7 9'),
    p('M3 17h13M3 17L14 7M3 17L9 5M3 17l12-5'),
    p('M2 5h14M2 8h14M2 11h8M2 14h8M2 18h14') + p('M11 12h5v4h-5z', 'f'),
    p('M2 5h14M2 8h14M2 11h8M2 14h8M2 18h14') + p('M10 11h7v2h-2v4h-3v-4h-2z', 'f'),
    p('M2 5h14M2 8h14M2 11h7M2 14h7M2 18h14') + t(9, 16, 'Q'),
    t(1, 11, '2') + p('M7 6h10M7 9h10M2 13h15M2 17h15'),
    t(1, 11, '3') + p('M7 6h10M7 9h10M2 13h15M2 17h15'),
    t(1, 11, '4') + p('M7 6h10M7 9h10M2 13h15M2 17h15'),
    p('M3 4v14M7 4v14M11 4v14M15 4v14M1 13L8 6M9 13l7-7'),
    p('M15 5L4 18') + '<circle cx="5" cy="7" r="2"/><circle cx="14" cy="16" r="2"/>',
    p('M1 14l4-3 3 2 4-4 4 2'),
    p('M3 18L16 5M5 8v10M9 8v9M13 5v10M2 11l13 6'),
    p('M2 18L15 5M5 18L17 7M4 10v8M8 6v12M12 4v10M2 9l14 9'),
    p('M9 3v16M5.500 7h7v8h-7z'),
    p('M4.500 5.500h9v13h-9z'),
    p('M2 6h6M5 3v6M2 11h6M10 10l6-6M2 15h15M2 18h15')
  ];
  document.getElementById('toolIcons').innerHTML = icons.map(function (s) {
    return '<svg class="tool-ic" viewBox="0 0 18 22">' + s + '</svg>';
  }).join('');
})();
```
